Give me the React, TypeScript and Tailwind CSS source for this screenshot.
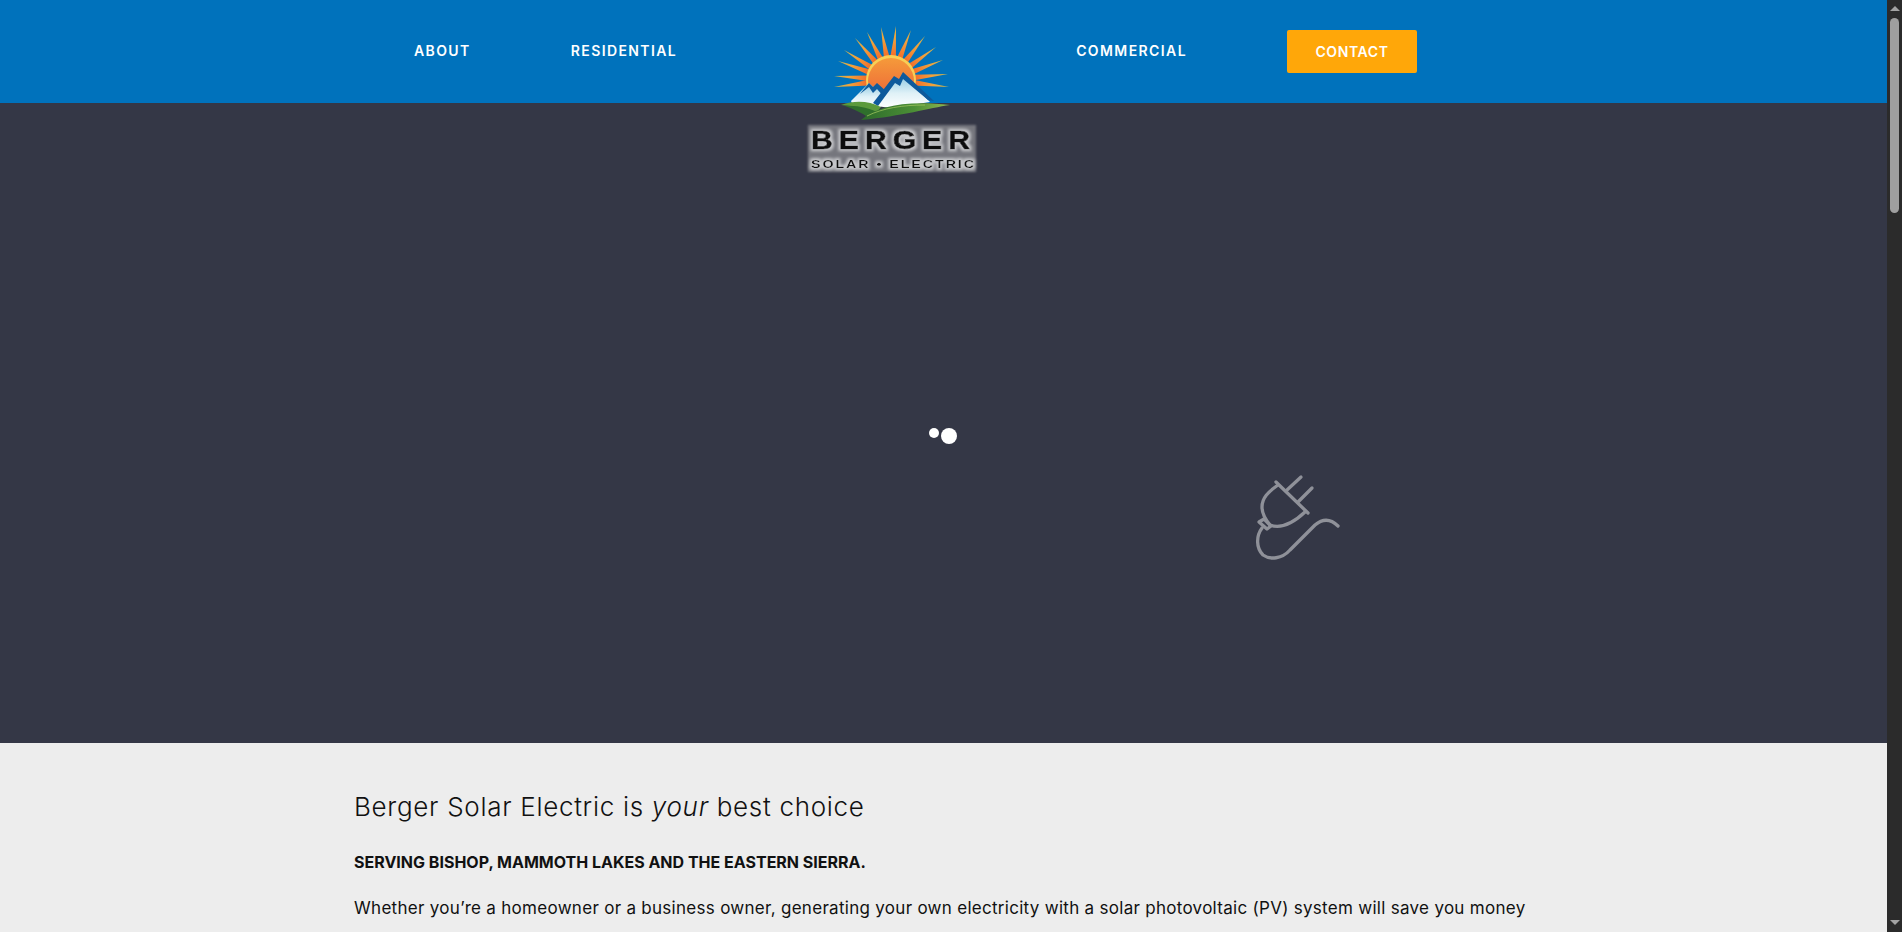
import React from "react";

// sun ray tips, measured from the logo
const rayTips = [
  [55, 87], [55, 76], [59, 61], [65, 50], [76, 38], [88, 32], [102, 27],
  [117, 26], [132, 30], [146, 36], [157, 47], [164, 60], [169, 74], [170, 87],
];
const sunX = 112;
const sunY = 80;

function rayPoints(tip: number[]) {
  const dx = tip[0] - sunX;
  const dy = tip[1] - sunY;
  const len = Math.sqrt(dx * dx + dy * dy);
  const ux = dx / len;
  const uy = dy / len;
  const baseR = 22;
  const bx = sunX + ux * baseR;
  const by = sunY + uy * baseR;
  const w = 2.9;
  return `${bx - uy * w},${by + ux * w} ${tip[0]},${tip[1]} ${bx + uy * w},${by - ux * w}`;
}

function Logo() {
  return (
    <svg width="220" height="190" viewBox="0 0 220 190">
      <defs>
        <radialGradient id="sideRay" gradientUnits="userSpaceOnUse" cx="112" cy="80" r="60">
          <stop offset="0.4" stopColor="#f26d2b" />
          <stop offset="0.68" stopColor="#f2a03a" />
          <stop offset="1" stopColor="#c4bf55" />
        </radialGradient>
        <linearGradient id="sunGrad" x1="0" y1="0" x2="0" y2="1">
          <stop offset="0" stopColor="#f59a3a" />
          <stop offset="1" stopColor="#ec5f38" />
        </linearGradient>
        <linearGradient id="snow" x1="0" y1="0" x2="0" y2="1">
          <stop offset="0" stopColor="#8ac6e0" />
          <stop offset="0.55" stopColor="#dff1f7" />
          <stop offset="1" stopColor="#ffffff" />
        </linearGradient>
        <linearGradient id="hill" x1="0" y1="0" x2="1" y2="0">
          <stop offset="0" stopColor="#2c6a2b" />
          <stop offset="0.6" stopColor="#4c8f36" />
          <stop offset="1" stopColor="#93b952" />
        </linearGradient>
        <filter id="soft" x="-10%" y="-30%" width="120%" height="160%">
          <feGaussianBlur stdDeviation="0.8" />
        </filter>
        {/* light haze round the black letters */}
        <filter id="haze" x="-4%" y="-20%" width="108%" height="140%">
          <feMorphology in="SourceAlpha" operator="dilate" radius="1.5" result="fat" />
          <feGaussianBlur in="fat" stdDeviation="1.6" result="blur" />
          <feFlood floodColor="#c8c9cc" />
          <feComposite in2="blur" operator="in" result="glow" />
          <feMerge>
            <feMergeNode in="glow" />
            <feMergeNode in="SourceGraphic" />
          </feMerge>
        </filter>
      </defs>

      {rayTips.map((tip, i) => (
        <polygon key={i} points={rayPoints(tip)} fill="url(#sideRay)" />
      ))}
      <circle cx={sunX} cy={sunY} r="25" fill="#f7cf55" />
      <circle cx={sunX} cy={sunY + 1} r="23" fill="url(#sunGrad)" />

      {/* mountains */}
      <path d="M72 101 L90 83 L94 87 L98 84 L112 97 L100 108 L74 106 Z" fill="url(#snow)" />
      <path d="M90 83 L94 87 L98 83 L108 92 L105 97 L98 89 L94 93 L90 87 L81 94 Z" fill="#0f5c9e" />
      <path d="M97 106 L116 79 L121 82 L124 75 L151 102 L112 108 Z" fill="url(#snow)" />
      <path d="M94 103 L115 76 L120 79 L124 72 L155 101 L149 100 L124 79 L121 86 L116 83 L99 106 Z" fill="#0e5a9c" />

      {/* fields */}
      <path d="M62 105 C 76 100, 90 101, 102 107 L 98 112 C 86 108, 74 106, 62 105 Z" fill="#5b9a3c" />
      <path d="M66 106 C 78 105, 90 108, 100 113 L 90 118 C 82 112, 74 109, 66 106 Z" fill="#2f6f2c" />
      <path d="M82 120 C 98 106, 128 100, 171 105 C 150 108, 124 116, 82 120 Z" fill="url(#hill)" />
      <path d="M88 116 C 104 108, 124 105, 146 105" fill="none" stroke="#9cc15c" strokeWidth="0.8" />

      {/* name plate */}
      <rect x="29" y="125" width="168" height="47" fill="#74767d" filter="url(#soft)" />
      <text
        x="32"
        y="149"
        textLength="165"
        lengthAdjust="spacingAndGlyphs"
        letterSpacing="5"
        fontFamily="'Liberation Sans', sans-serif"
        fontWeight="700"
        fontSize="25"
        fill="#08080a"
        stroke="#08080a"
        strokeWidth="0.6"
        filter="url(#haze)"
      >
        BERGER
      </text>
      <text
        x="32"
        y="168"
        textLength="165"
        lengthAdjust="spacingAndGlyphs"
        letterSpacing="1.5"
        fontFamily="'Liberation Sans', sans-serif"
        fontWeight="700"
        fontSize="11"
        fill="#08080a"
        filter="url(#haze)"
      >
        SOLAR • ELECTRIC
      </text>
    </svg>
  );
}

function PlugIcon() {
  return (
    <svg width="130" height="110" viewBox="0 0 130 110" fill="none" stroke="#8f9199" strokeWidth="3.3" strokeLinecap="round" strokeLinejoin="round">
      <path d="M57 30 L71 17" />
      <path d="M68 42 L82 28" />
      <path d="M46 22 L78 53" />
      <path d="M48 25 C 38 32, 32 38, 32 47 C 32 54, 35 59, 40 65 C 48 68, 60 66, 75 52" />
      <path d="M29 62 L34 59 L41 66 L37 69 Z" />
      <path d="M32 68 C 26 76, 26 88, 33 95 C 40 100, 52 99, 60 90 L 85 65 C 92 59, 100 58, 108 66" />
    </svg>
  );
}

function Scrollbar() {
  return (
    <div className="w-[15px] shrink-0 bg-[#2b2b2b] flex flex-col items-center">
      <div className="mt-[6px] w-0 h-0 border-x-[5px] border-x-transparent border-b-[5px] border-b-[#a3a3a3]" />
      <div className="mt-[7px] w-[9px] h-[195px] rounded-full bg-[#9f9f9f]" />
      <div className="mt-auto mb-[7px] w-0 h-0 border-x-[5px] border-x-transparent border-t-[5px] border-t-[#a3a3a3]" />
    </div>
  );
}

export default function App() {
  const navCls = "text-[14px] font-semibold tracking-[1.4px] text-white mb-[2px]";

  return (
    <div className="h-screen flex overflow-hidden font-['Inter','Liberation_Sans',sans-serif]">
      <div className="flex-1 min-w-0 flex flex-col">
        {/* Header */}
        <header className="h-[103px] shrink-0 bg-[#0072bc] flex items-center pl-[414px]">
          <a className={navCls}>ABOUT</a>
          <a className={`${navCls} ml-[100px]`}>RESIDENTIAL</a>
          <div className="relative w-[399px] h-[43px]">
            <div className="absolute left-[102px] top-[-30px] z-10">
              <Logo />
            </div>
          </div>
          <a className={navCls}>COMMERCIAL</a>
          <a className="ml-[100px] w-[130px] h-[43px] flex items-center justify-center rounded-[2px] bg-[#ffa709] text-[14px] font-semibold tracking-[0.6px] text-white">
            CONTACT
          </a>
        </header>

        {/* Hero */}
        <section className="relative h-[640px] shrink-0 bg-[#343746]">
          <span className="absolute left-[929px] top-[325px] w-[10px] h-[10px] rounded-full bg-white" />
          <span className="absolute left-[941px] top-[325px] w-[16px] h-[16px] rounded-full bg-white" />
          <div className="absolute left-[1230px] top-[357px]">
            <PlugIcon />
          </div>
        </section>

        {/* Intro */}
        <section className="flex-1 bg-[#ededed] pl-[354px] pt-[47px] text-[#111]">
          <h2 className="text-[26px] leading-[34px] font-light tracking-[0.7px]">
            Berger Solar Electric is <em>your</em> best choice
          </h2>
          <p className="mt-[26px] text-[16px] leading-[24px] font-bold">
            SERVING BISHOP, MAMMOTH LAKES AND THE EASTERN SIERRA.
          </p>
          <p className="mt-[22px] text-[17px] leading-[24px] tracking-[0.29px] whitespace-nowrap">
            Whether you’re a homeowner or a business owner, generating your own electricity with a solar photovoltaic (PV) system will save you money
          </p>
        </section>
      </div>
      <Scrollbar />
    </div>
  );
}
